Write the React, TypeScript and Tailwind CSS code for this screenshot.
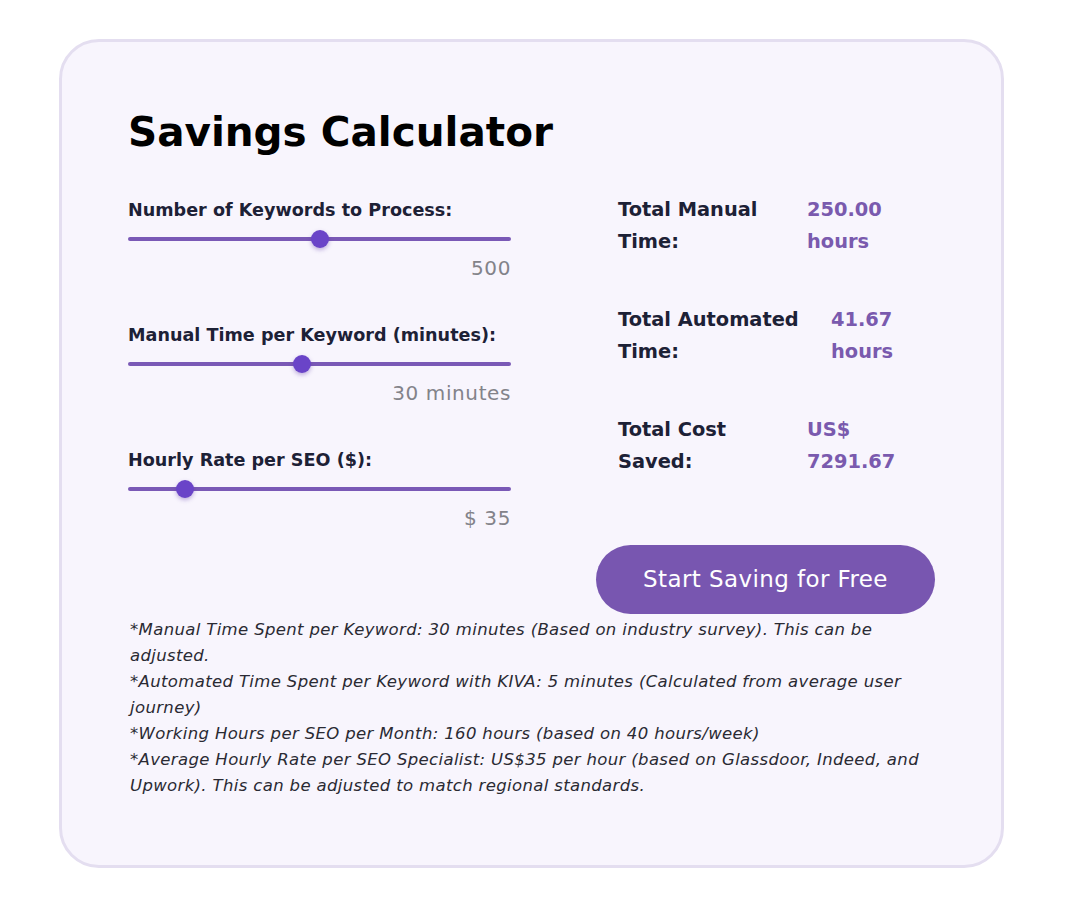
import React from "react";

const font = { fontFamily: '"DejaVu Sans", "Noto Sans", sans-serif' };

function Slider({ label, pct, value }: { label: string; pct: number; value: string }) {
  return (
    <div className="flex flex-col">
      <div className="text-[17.6px] font-bold text-[#1d2136] leading-[24px] whitespace-nowrap">{label}</div>
      <div className="relative h-[18px] mt-[8px] flex items-center">
        <div className="h-[4px] w-full rounded-full bg-[#7a59b6]" />
        <div
          className="absolute top-0 h-[18px] w-[18px] -ml-[9px] rounded-full bg-[#6a44c8] shadow-[0_2px_4px_rgba(80,40,160,0.35)]"
          style={{ left: `${pct}%` }}
        />
      </div>
      <div className="text-right text-[20px] font-normal tracking-[0.6px] text-[#83838a] leading-[26px] mt-[7px]">{value}</div>
    </div>
  );
}

function Result({ l1, l2, v1, v2, labelW }: { l1: string; l2: string; v1: string; v2: string; labelW: string }) {
  return (
    <div className="flex text-[19.4px] font-bold leading-[32px] whitespace-nowrap">
      <div className={`${labelW} text-[#1d2136]`}>
        <div>{l1}</div>
        <div>{l2}</div>
      </div>
      <div className="text-[#7a5aae]">
        <div>{v1}</div>
        <div>{v2}</div>
      </div>
    </div>
  );
}

export default function App() {
  return (
    <div className="min-h-[908px] w-[1080px] bg-white pt-[39px] pl-[59px]" style={font}>
      <div className="w-[945px] h-[829px] rounded-[40px] border-[3px] border-[#e4def0] bg-[#f8f5fd] pl-[66px] pr-[66px] pt-[62px]">
        <h1 className="text-[40.5px] font-bold text-black leading-[56px]">Savings Calculator</h1>
        <div className="flex mt-[38px]">
          <div className="w-[383px] flex flex-col gap-[42px]">
            <Slider label="Number of Keywords to Process:" pct={50} value="500" />
            <Slider label="Manual Time per Keyword (minutes):" pct={45.5} value="30 minutes" />
            <Slider label="Hourly Rate per SEO ($):" pct={15} value="$ 35" />
          </div>
          <div className="ml-[85px] w-[339px] flex flex-col">
            <div className="pl-[22px] flex flex-col gap-[46px] mt-[-4px]">
              <Result l1="Total Manual" l2="Time:" v1="250.00" v2="hours" labelW="w-[189px]" />
              <Result l1="Total Automated" l2="Time:" v1="41.67" v2="hours" labelW="w-[213px]" />
              <Result l1="Total Cost" l2="Saved:" v1="US$" v2="7291.67" labelW="w-[189px]" />
            </div>
            <button className="mt-[67px] h-[69px] w-[339px] rounded-full bg-[#7856b0] text-white text-[23px] tracking-[0.4px] font-normal">
              Start Saving for Free
            </button>
          </div>
        </div>
        <div className="mt-[3px] w-[792px] pl-[2px] italic text-[16.5px] tracking-[0.35px] leading-[26px] text-[#2a2a33]">
          <p>*Manual Time Spent per Keyword: 30 minutes (Based on industry survey). This can be adjusted.</p>
          <p>*Automated Time Spent per Keyword with KIVA: 5 minutes (Calculated from average user journey)</p>
          <p>*Working Hours per SEO per Month: 160 hours (based on 40 hours/week)</p>
          <p>*Average Hourly Rate per SEO Specialist: US$35 per hour (based on Glassdoor, Indeed, and Upwork). This can be adjusted to match regional standards.</p>
        </div>
      </div>
    </div>
  );
}
